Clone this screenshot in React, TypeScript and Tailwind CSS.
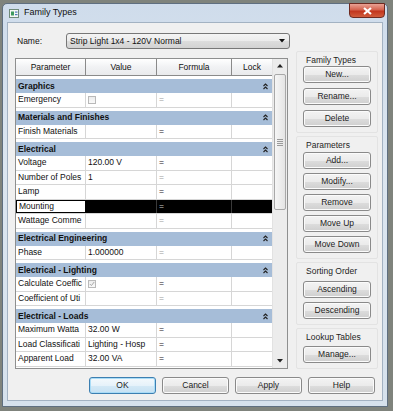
import React from "react";

type Row = { p: string; v?: string; check?: "off" | "on"; dim?: boolean; sel?: boolean };
type Section = { name: string; rows: Row[] };

const sections: Section[] = [
  { name: "Graphics", rows: [{ p: "Emergency", check: "off", dim: true }] },
  { name: "Materials and Finishes", rows: [{ p: "Finish Materials" }] },
  {
    name: "Electrical",
    rows: [
      { p: "Voltage", v: "120.00 V" },
      { p: "Number of Poles", v: "1", dim: true },
      { p: "Lamp" },
      { p: "Mounting", sel: true },
      { p: "Wattage Comme", dim: true },
    ],
  },
  { name: "Electrical Engineering", rows: [{ p: "Phase", v: "1.000000", dim: true }] },
  {
    name: "Electrical - Lighting",
    rows: [
      { p: "Calculate Coeffic", check: "on" },
      { p: "Coefficient of Uti", dim: true },
    ],
  },
  {
    name: "Electrical - Loads",
    rows: [
      { p: "Maximum Watta", v: "32.00 W" },
      { p: "Load Classificati", v: "Lighting - Hosp" },
      { p: "Apparent Load", v: "32.00 VA" },
    ],
  },
];

const Btn = ({ label, def = false, className = "" }: { label: string; def?: boolean; className?: string }) => (
  <div
    className={`h-[17px] flex items-center justify-center rounded-[3px] border text-[8.5px] text-[#1c1c1c] ${
      def
        ? "border-[#3c7fb1] shadow-[inset_0_0_0_1px_#a9dcf7] bg-[linear-gradient(#f4f9fc_0%,#e6f2fa_50%,#d4e9f6_51%,#c6e1f3_100%)]"
        : "border-[#8a8a8a] shadow-[inset_0_0_0_1px_#fbfbfb] bg-[linear-gradient(#f3f3f3_0%,#ebebeb_50%,#dddddd_51%,#cfcfcf_100%)]"
    } ${className}`}
  >
    {label}
  </div>
);

const Chevrons = () => (
  <svg width="5" height="7" viewBox="0 0 5 7">
    <path d="M0.5 3 L2.5 1 L4.5 3 M0.5 6 L2.5 4 L4.5 6" fill="none" stroke="#222" strokeWidth="1.1" />
  </svg>
);

const Check = ({ on }: { on: boolean }) => (
  <div className="w-[8px] h-[8px] border border-[#b9b9b9] bg-[linear-gradient(#ececec,#fafafa)] flex items-center justify-center">
    {on && (
      <svg width="6" height="6" viewBox="0 0 6 6">
        <path d="M0.8 3 L2.4 4.6 L5.2 1" fill="none" stroke="#a8a8a8" strokeWidth="1" />
      </svg>
    )}
  </div>
);

const DataRow = ({ r }: { r: Row }) => (
  <div className="flex h-[14.5px] border-b border-[#d6d6d6]">
    <div
      className={`w-[70px] shrink-0 pl-[2px] flex items-center overflow-hidden whitespace-nowrap ${
        r.sel ? "border border-black" : "border-r border-[#d6d6d6]"
      }`}
    >
      {r.p}
    </div>
    <div
      className={`w-[71px] shrink-0 pl-[2px] flex items-center overflow-hidden whitespace-nowrap border-r ${
        r.sel ? "bg-black border-[#3a3a3a]" : "border-[#d6d6d6]"
      }`}
    >
      {r.check ? <Check on={r.check === "on"} /> : r.v}
    </div>
    <div
      className={`w-[75px] shrink-0 pl-[2px] flex items-center border-r ${
        r.sel ? "bg-black border-[#3a3a3a] text-[#cfcfcf]" : r.dim ? "border-[#d6d6d6] text-[#9a9a9a]" : "border-[#d6d6d6]"
      }`}
    >
      =
    </div>
    <div className={`w-[40px] shrink-0 ${r.sel ? "bg-black" : ""}`} />
  </div>
);

const Group = ({ title, items, gap }: { title: string; items: string[]; gap: string }) => (
  <div className="border border-[#e3e3e3] rounded-[2px] px-[6px] pt-[3px] pb-[5px]">
    <div className="h-[10px] leading-[10px] pl-[3px] text-[8.5px] text-[#1e1e1e]">{title}</div>
    <div className={`flex flex-col gap-[4px] ${gap}`}>
      {items.map((t) => (
        <Btn key={t} label={t} />
      ))}
    </div>
  </div>
);

export default function App() {
  return (
    <div className="w-[393px] h-[411px] overflow-hidden bg-[#7f837c] pt-[3px] pl-[2px] font-['Liberation_Sans',Arial,sans-serif] text-[8.5px] text-[#111]">
      {/* window frame */}
      <div className="w-[386px] h-[404px] rounded-t-[5px] border border-[#5f6f80] bg-[linear-gradient(#cfdceb,#dce6f0_40%,#d6e1ec)] flex flex-col relative">
        {/* title bar */}
        <div className="h-[18px] flex items-center pl-[6px] gap-[5px] shrink-0">
          <svg width="10" height="9" viewBox="0 0 10 9">
            <rect x="0.5" y="0.5" width="9" height="8" fill="#f4f7f4" stroke="#6f8a7a" />
            <rect x="2" y="2.5" width="3" height="4" fill="#3e9a5e" />
            <rect x="6" y="2.5" width="2.5" height="1.2" fill="#4a78b8" />
            <rect x="6" y="5" width="2.5" height="1.2" fill="#4a78b8" />
          </svg>
          <span className="text-[9px] text-[#101010]">Family Types</span>
        </div>
        <div className="absolute right-[2px] top-[-1px] w-[36px] h-[15px] rounded-b-[4px] border border-[#6e2a20] bg-[linear-gradient(#e9a294_0%,#d4624d_45%,#c2351d_55%,#d15c3c_100%)] flex items-center justify-center">
          <svg width="9" height="8" viewBox="0 0 9 8">
            <path d="M1 1 L8 7 M8 1 L1 7" stroke="#fff" strokeWidth="2.2" />
          </svg>
        </div>

        {/* client area */}
        <div className="mx-[4px] w-[376px] h-[379px] border border-[#a3b2c2] bg-[#f0f0f0] flex flex-col">
          <div className="flex">
            {/* left column */}
            <div className="w-[282px] pl-[7px] shrink-0">
              <div className="mt-[10px] h-[16px] flex items-center">
                <div className="w-[51px] pl-[2px]">Name:</div>
                <div className="flex-1 h-[16px] rounded-[3px] border border-[#777] bg-[linear-gradient(#f4f4f4_0%,#ebebeb_50%,#dddddd_51%,#d2d2d2_100%)] flex items-center justify-between pl-[3px] pr-[4px]">
                  <span>Strip Light 1x4 - 120V Normal</span>
                  <svg width="6" height="4" viewBox="0 0 6 4">
                    <path d="M0 0 H6 L3 3.5 Z" fill="#111" />
                  </svg>
                </div>
              </div>

              {/* table */}
              <div className="mt-[9px] w-[273px] h-[311px] border border-[#8e8f8f] bg-white flex">
                <div className="w-[256px] flex flex-col">
                  <div className="h-[17px] flex border-b border-[#8a8a8a] bg-[linear-gradient(#ffffff,#f1f2f4_50%,#e9eaec)] shrink-0">
                    <div className="w-[70px] flex items-center justify-center border-r border-[#8a8a8a]">Parameter</div>
                    <div className="w-[71px] flex items-center justify-center border-r border-[#8a8a8a]">Value</div>
                    <div className="w-[75px] flex items-center justify-center border-r border-[#8a8a8a]">Formula</div>
                    <div className="w-[40px] flex items-center justify-center">Lock</div>
                  </div>
                  {sections.map((s) => (
                    <div key={s.name}>
                      <div className="pt-[3px] bg-white">
                        <div className="h-[14px] bg-[#a6bdd8] flex items-center justify-between pl-[2px] pr-[4px] font-bold">
                          <span>{s.name}</span>
                          <Chevrons />
                        </div>
                      </div>
                      {s.rows.map((r) => (
                        <DataRow key={r.p} r={r} />
                      ))}
                    </div>
                  ))}
                </div>
                {/* scrollbar */}
                <div className="w-[15px] bg-[#ececec] border-l border-[#e2e2e2] flex flex-col">
                  <div className="h-[14px] flex items-center justify-center">
                    <svg width="6" height="4" viewBox="0 0 6 4">
                      <path d="M0 3.5 H6 L3 0 Z" fill="#222" />
                    </svg>
                  </div>
                  <div className="mt-[1px] mx-[1px] h-[136px] rounded-[2px] border border-[#a8a8a8] bg-[linear-gradient(90deg,#f6f6f6,#e4e4e4)] flex flex-col items-center justify-center gap-[1px]">
                    <div className="w-[6px] h-px bg-[#9a9a9a]" />
                    <div className="w-[6px] h-px bg-[#9a9a9a]" />
                    <div className="w-[6px] h-px bg-[#9a9a9a]" />
                    <div className="w-[6px] h-px bg-[#9a9a9a]" />
                  </div>
                  <div className="flex-1" />
                  <div className="h-[14px] flex items-center justify-center">
                    <svg width="6" height="4" viewBox="0 0 6 4">
                      <path d="M0 0 H6 L3 3.5 Z" fill="#222" />
                    </svg>
                  </div>
                </div>
              </div>
            </div>

            {/* right column */}
            <div className="ml-[6px] w-[82px] pt-[28px] flex flex-col gap-[3px]">
              <Group title="Family Types" items={["New...", "Rename...", "Delete"]} gap="mt-[1px] gap-[5px]" />
              <Group title="Parameters" items={["Add...", "Modify...", "Remove", "Move Up", "Move Down"]} gap="mt-[2px]" />
              <Group title="Sorting Order" items={["Ascending", "Descending"]} gap="mt-[5px]" />
              <Group title="Lookup Tables" items={["Manage..."]} gap="mt-[4px]" />
            </div>
          </div>

          {/* bottom buttons */}
          <div className="mt-[8px] flex justify-end gap-[6px] pr-[7px]">
            <Btn label="OK" def className="w-[67px]" />
            <Btn label="Cancel" className="w-[67px]" />
            <Btn label="Apply" className="w-[67px]" />
            <Btn label="Help" className="w-[67px]" />
          </div>
        </div>
      </div>
    </div>
  );
}
